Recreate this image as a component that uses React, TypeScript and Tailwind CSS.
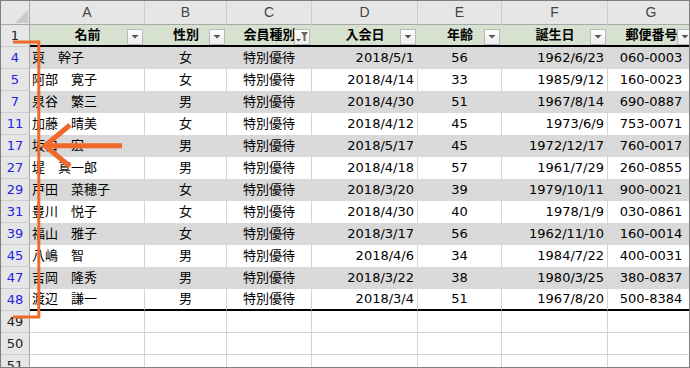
import React from "react";

type Align = "left" | "center" | "right";
const cols: { letter: string; w: string; align: Align; head: string }[] = [
  { letter: "A", w: "w-[115px]", align: "left", head: "名前" },
  { letter: "B", w: "w-[82px]", align: "center", head: "性別" },
  { letter: "C", w: "w-[85px]", align: "center", head: "会員種別" },
  { letter: "D", w: "w-[106px]", align: "right", head: "入会日" },
  { letter: "E", w: "w-[84px]", align: "center", head: "年齢" },
  { letter: "F", w: "w-[106px]", align: "right", head: "誕生日" },
  { letter: "G", w: "w-[87px]", align: "center", head: "郵便番号" },
];

const rows: [string, string[]][] = [
  ["4", ["東　幹子", "女", "特別優待", "2018/5/1", "56", "1962/6/23", "060-0003"]],
  ["5", ["阿部　寛子", "女", "特別優待", "2018/4/14", "33", "1985/9/12", "160-0023"]],
  ["7", ["泉谷　繁三", "男", "特別優待", "2018/4/30", "51", "1967/8/14", "690-0887"]],
  ["11", ["加藤　晴美", "女", "特別優待", "2018/4/12", "45", "1973/6/9", "753-0071"]],
  ["17", ["坂口　宏", "男", "特別優待", "2018/5/17", "45", "1972/12/17", "760-0017"]],
  ["27", ["堤　真一郎", "男", "特別優待", "2018/4/18", "57", "1961/7/29", "260-0855"]],
  ["29", ["戸田　菜穂子", "女", "特別優待", "2018/3/20", "39", "1979/10/11", "900-0021"]],
  ["31", ["豊川　悦子", "女", "特別優待", "2018/4/30", "40", "1978/1/9", "030-0861"]],
  ["39", ["福山　雅子", "女", "特別優待", "2018/3/17", "56", "1962/11/10", "160-0014"]],
  ["45", ["八嶋　智", "男", "特別優待", "2018/4/6", "34", "1984/7/22", "400-0031"]],
  ["47", ["吉岡　隆秀", "男", "特別優待", "2018/3/22", "38", "1980/3/25", "380-0837"]],
  ["48", ["渡辺　謙一", "男", "特別優待", "2018/3/4", "51", "1967/8/20", "500-8384"]],
];

const alignCls: Record<Align, string> = {
  left: "justify-start pl-[2px]",
  center: "justify-center",
  right: "justify-end pr-[3px]",
};

function RowHead({ n, blue, h = "h-[22px]" }: { n: string; blue?: boolean; h?: string }) {
  return (
    <div
      className={`w-[29px] ${h} shrink-0 flex items-center justify-center bg-[#e6e6e6] border-r border-b border-r-[#a8a8a8] border-b-[#cdcdcd] text-[13px] ${
        blue ? "text-[#2222e6]" : "text-[#222]"
      }`}
    >
      {n}
    </div>
  );
}

function FilterButton({ active }: { active?: boolean }) {
  return (
    <div className="absolute right-[2px] bottom-0 w-[16px] h-[16px] border border-[#b9b9b9] bg-gradient-to-b from-[#ffffff] to-[#ececec] flex items-center justify-center">
      {active ? (
        <svg width="14" height="14" viewBox="0 0 14 14">
          <polygon points="1,9 6,9 3.5,11.5" fill="#555" />
          <polygon points="6,2 13,2 10.5,5.5 10.5,11 8.5,11 8.5,5.5" fill="#666" />
        </svg>
      ) : (
        <svg width="14" height="14" viewBox="0 0 14 14">
          <polygon points="3.5,5 10.5,5 7,8.5" fill="#555" />
        </svg>
      )}
    </div>
  );
}

export default function App() {
  return (
    <div className="w-[690px] h-[368px] border border-[#7f7f7f] overflow-hidden relative bg-white font-['DejaVu_Sans','Noto_Sans_CJK_JP',sans-serif] text-black">
      {/* column letters */}
      <div className="flex h-[24px] w-[800px]">
        <div className="w-[29px] h-[24px] shrink-0 bg-[#e6e6e6] border-r border-b border-r-[#a8a8a8] border-b-[#a8a8a8] relative">
          <svg className="absolute left-0 top-0" width="28" height="23" viewBox="0 0 28 23">
            <polygon points="14,22 27,22 27,9" fill="#c9c9c9" />
          </svg>
        </div>
        {cols.map((c) => (
          <div
            key={c.letter}
            className={`${c.w} h-[24px] shrink-0 bg-[#e6e6e6] border-r border-b border-r-[#cccccc] border-b-[#a8a8a8] flex items-center justify-center font-['Liberation_Sans',sans-serif] text-[14px] text-[#444]`}
          >
            {c.letter}
          </div>
        ))}
      </div>

      {/* header row 1 */}
      <div className="flex h-[22px] w-[800px]">
        <RowHead n="1" />
        {cols.map((c, i) => (
          <div
            key={c.letter}
            className={`${c.w} h-[22px] shrink-0 relative bg-[#d7e1d0] border-b-2 border-b-black flex items-center justify-center text-[13px] font-bold overflow-hidden`}
          >
            <span>{c.head}</span>
            <FilterButton active={i === 2} />
          </div>
        ))}
      </div>

      {/* data rows */}
      {rows.map(([n, cells], ri) => {
        const gray = ri % 2 === 0;
        const last = ri === rows.length - 1;
        return (
          <div key={n} className="flex h-[22px] w-[800px]">
            <RowHead n={n} blue />
            {cells.map((v, ci) => (
              <div
                key={ci}
                className={`${cols[ci].w} h-[22px] shrink-0 flex items-center ${alignCls[cols[ci].align]} text-[13px] border-r ${
                  gray ? "bg-[#d9d9d9] border-r-[#d9d9d9]" : "bg-white border-r-[#d4d4d4]"
                } ${last ? "border-b-2 border-b-black" : ""}`}
              >
                {v}
              </div>
            ))}
          </div>
        );
      })}

      {/* empty rows */}
      {["49", "50", "51"].map((n) => (
        <div key={n} className="flex h-[22px] w-[800px]">
          <RowHead n={n} />
          {cols.map((c) => (
            <div
              key={c.letter}
              className={`${c.w} h-[22px] shrink-0 border-r border-b border-[#d4d4d4] bg-white`}
            />
          ))}
        </div>
      ))}

      {/* annotation overlay */}
      <svg
        className="absolute left-[-1px] top-[-1px] pointer-events-none"
        width="690"
        height="368"
        viewBox="0 0 690 368"
      >
        <polyline
          points="13,42 38.8,42 38.8,317 13,317"
          fill="none"
          stroke="#f0692a"
          strokeWidth="3"
        />
        <line x1="48" y1="145.8" x2="122" y2="145.8" stroke="#f0692a" strokeWidth="5" />
        <polyline
          points="70,125 45,145.8 70,166.5"
          fill="none"
          stroke="#f0692a"
          strokeWidth="5"
          strokeLinejoin="miter"
        />
      </svg>
    </div>
  );
}
